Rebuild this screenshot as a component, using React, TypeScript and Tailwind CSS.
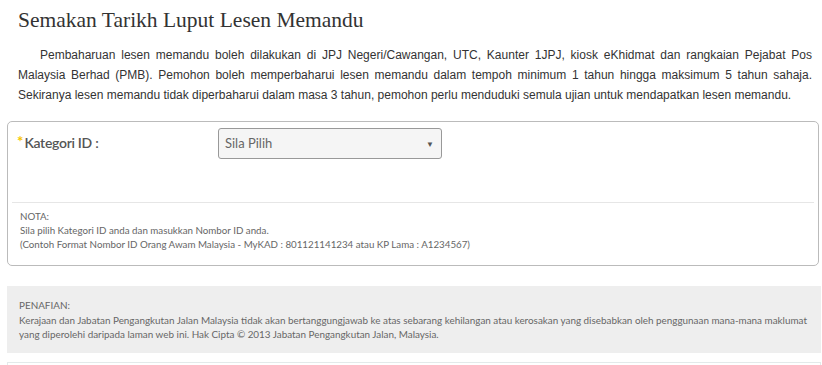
export default function App() {
  return (
    <div className="w-[822px] h-[365px] overflow-hidden bg-white">
      <div className="pl-[18px] pr-[10px]">
        <h1 className="pt-[5px] text-[21.5px] leading-[30px] text-[#333]" style={{ fontFamily: '"Liberation Serif", serif' }}>
          Semakan Tarikh Luput Lesen Memandu
        </h1>
        <p
          className="mt-[10px] text-[12px] leading-[20px] text-[#333] text-justify indent-[22px]"
          style={{ fontFamily: '"Liberation Sans", Arial, sans-serif' }}
        >
          Pembaharuan lesen memandu boleh dilakukan di JPJ Negeri/Cawangan, UTC, Kaunter 1JPJ, kiosk eKhidmat dan rangkaian Pejabat Pos Malaysia Berhad (PMB). Pemohon boleh memperbaharui lesen memandu dalam tempoh minimum 1 tahun hingga maksimum 5 tahun sahaja. Sekiranya lesen memandu tidak diperbaharui dalam masa 3 tahun, pemohon perlu menduduki semula ujian untuk mendapatkan lesen memandu.
        </p>
      </div>
      <div style={{ fontFamily: 'Lato, sans-serif' }}>
        <div className="ml-[7px] mr-[3px] mt-[16px] h-[145px] border border-[#bbb] rounded-[5px] px-[4px] flex flex-col">
          <div className="flex items-start h-[80px] pt-[6px]">
            <div className="w-[206px] flex items-start pl-[5px] pt-[7px]">
              <span className="text-[15px] font-bold text-[#f7c600] leading-[12px] mr-[1px]">*</span>
              <span className="text-[14px] font-semibold text-[#555] leading-[16px] tracking-[-0.3px]">Kategori ID :</span>
            </div>
            <div className="w-[224px] h-[31px] bg-[#f5f5f5] border border-[#999] rounded-[3px] flex items-center justify-between pl-[6px] pr-[7px]">
              <span className="text-[13px] text-[#666]">Sila Pilih</span>
              <span className="text-[8px] text-[#555]">▼</span>
            </div>
          </div>
          <div className="border-t border-[#e6e6e6] pt-[6px] pl-[8px] text-[9.75px] leading-[14px] text-[#666]">
            <div>NOTA:</div>
            <div>Sila pilih Kategori ID anda dan masukkan Nombor ID anda.</div>
            <div>(Contoh Format Nombor ID Orang Awam Malaysia - MyKAD : 801121141234 atau KP Lama : A1234567)</div>
          </div>
        </div>
        <div className="ml-[7px] mr-[1px] mt-[20px] h-[67px] bg-[#eeeeee] pl-[12px] pt-[12px] text-[9.9px] leading-[14.5px] text-[#666]">
          <div>PENAFIAN:</div>
          <div>Kerajaan dan Jabatan Pengangkutan Jalan Malaysia tidak akan bertanggungjawab ke atas sebarang kehilangan atau kerosakan yang disebabkan oleh penggunaan mana-mana maklumat</div>
          <div>yang diperolehi daripada laman web ini. Hak Cipta © 2013 Jabatan Pengangkutan Jalan, Malaysia.</div>
        </div>
        <div className="ml-[7px] mr-[1px] mt-[9px] h-[20px] border-t border-l border-r border-[#e3eaea]"></div>
      </div>
    </div>
  );
}
